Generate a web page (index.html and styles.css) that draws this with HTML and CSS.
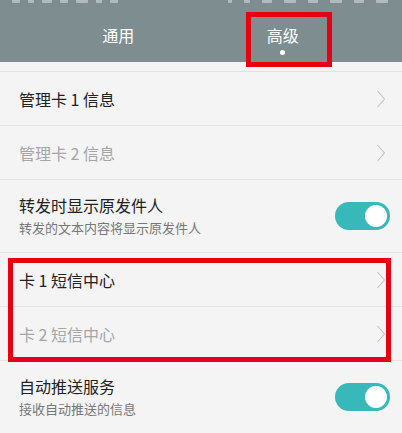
FILE: index.html
```html
<!DOCTYPE html>
<html lang="zh-CN">
<head>
<meta charset="utf-8">
<title>信息设置</title>
<link rel="stylesheet" href="styles.css">
</head>
<body>
<div class="screen">
  <header class="header">
    <div class="status">
      <div class="status-group">
        <span class="sb sb-w8"></span><span class="sb sb-w6"></span><span class="sb sb-w10"></span><span class="sb sb-w8"></span><span class="sb sb-w12"></span><span class="sb sb-w6"></span><span class="sb sb-w8"></span>
      </div>
      <div class="status-group status-right">
        <span class="sb sb-w4"></span><span class="sb sb-w6"></span><span class="sb sb-w10"></span><span class="sb sb-w12"></span><span class="sb sb-w10"></span><span class="sb sb-w12"></span><span class="sb sb-w10"></span><span class="sb sb-w12"></span>
      </div>
    </div>
    <nav class="tabs">
      <div class="tab">通用</div>
      <div class="tab tab-active">
        <span class="tab-label">高级</span>
        <span class="tab-dot"></span>
        <span class="mark mark-tab"></span>
      </div>
    </nav>
  </header>

  <main class="list">
    <div class="row">
      <div class="row-text"><div class="title">管理卡 1 信息</div></div>
      <svg class="chev" viewBox="0 0 10 18" width="10" height="18"><polyline points="1.5,1 8.5,9 1.5,17" /></svg>
    </div>
    <div class="row">
      <div class="row-text"><div class="title dim">管理卡 2 信息</div></div>
      <svg class="chev" viewBox="0 0 10 18" width="10" height="18"><polyline points="1.5,1 8.5,9 1.5,17" /></svg>
    </div>
    <div class="row row-tall">
      <div class="row-text">
        <div class="title">转发时显示原发件人</div>
        <div class="sub">转发的文本内容将显示原发件人</div>
      </div>
      <span class="switch"><span class="knob"></span></span>
    </div>
    <div class="group">
      <div class="row">
        <div class="row-text"><div class="title">卡 1 短信中心</div></div>
        <svg class="chev" viewBox="0 0 10 18" width="10" height="18"><polyline points="1.5,1 8.5,9 1.5,17" /></svg>
      </div>
      <div class="row">
        <div class="row-text"><div class="title dim">卡 2 短信中心</div></div>
        <svg class="chev" viewBox="0 0 10 18" width="10" height="18"><polyline points="1.5,1 8.5,9 1.5,17" /></svg>
      </div>
      <span class="mark mark-group"></span>
    </div>
    <div class="row row-tall">
      <div class="row-text">
        <div class="title">自动推送服务</div>
        <div class="sub">接收自动推送的信息</div>
      </div>
      <span class="switch"><span class="knob"></span></span>
    </div>
  </main>
</div>
</body>
</html>
```

FILE: styles.css
```css
* { box-sizing: border-box; }

html, body {
  margin: 0;
  padding: 0;
  background: #f4f4f4;
}

body {
  font-family: "Noto Sans CJK SC", "Noto Sans", sans-serif;
  width: 402px;
  height: 433px;
  overflow: hidden;
}

.screen {
  display: flex;
  flex-direction: column;
}

.header {
  background: #7e8d8f;
  height: 62px;
  display: flex;
  flex-direction: column;
}

.status {
  height: 5px;
  display: flex;
  justify-content: space-between;
  padding: 0 14px 0 12px;
}

.status-group {
  display: flex;
  gap: 8px;
  align-items: flex-start;
}

.status-right {
  gap: 12px;
}

.sb {
  height: 3px;
  background: rgba(255,255,255,0.4);
  border-radius: 0 0 1px 1px;
}

.sb-w4 { width: 4px; }
.sb-w6 { width: 6px; }
.sb-w8 { width: 8px; }
.sb-w10 { width: 10px; }
.sb-w12 { width: 12px; }

.tabs {
  display: grid;
  grid-template-columns: 1fr 1fr;
  padding: 0 37px 0 36px;
  flex: 1;
}

.tab {
  position: relative;
  display: flex;
  flex-direction: column;
  align-items: center;
  padding-top: 20px;
  font-size: 16px;
  line-height: 20px;
  color: #ffffff;
}

.tab-label { display: block; }

.tab-dot {
  width: 5px;
  height: 5px;
  border-radius: 50%;
  background: #ffffff;
  margin-top: 5px;
}

.mark {
  position: absolute;
  border: 5px solid #e60012;
  pointer-events: none;
}

.mark-tab {
  left: 45px;
  top: 7px;
  width: 86px;
  height: 55px;
}

.list {
  margin-top: 9px;
  border-top: 1px solid #e2e2e2;
}

.row {
  display: flex;
  align-items: center;
  height: 54px;
  padding: 0 16px 0 19px;
  border-bottom: 1px solid #e2e2e2;
}

.row-tall {
  height: 73px;
  padding-right: 12px;
}

.row-text {
  flex: 1;
  display: flex;
  flex-direction: column;
}

.title {
  font-size: 16px;
  line-height: 20px;
  color: #222222;
}

.title.dim { color: #a6a6a6; }

.sub {
  font-size: 13px;
  line-height: 18px;
  margin-top: 4px;
  color: #777777;
}

.chev {
  fill: none;
  stroke: #c4c4c4;
  stroke-width: 1.1;
}

.switch {
  display: flex;
  align-items: center;
  justify-content: flex-end;
  width: 55px;
  height: 28px;
  border-radius: 14px;
  background: #39b8b9;
  padding: 3px;
}

.knob {
  width: 22px;
  height: 22px;
  border-radius: 50%;
  background: #ffffff;
}

.group {
  position: relative;
}

.mark-group {
  left: 8px;
  right: 11px;
  top: 5px;
  bottom: -1px;
}
```
